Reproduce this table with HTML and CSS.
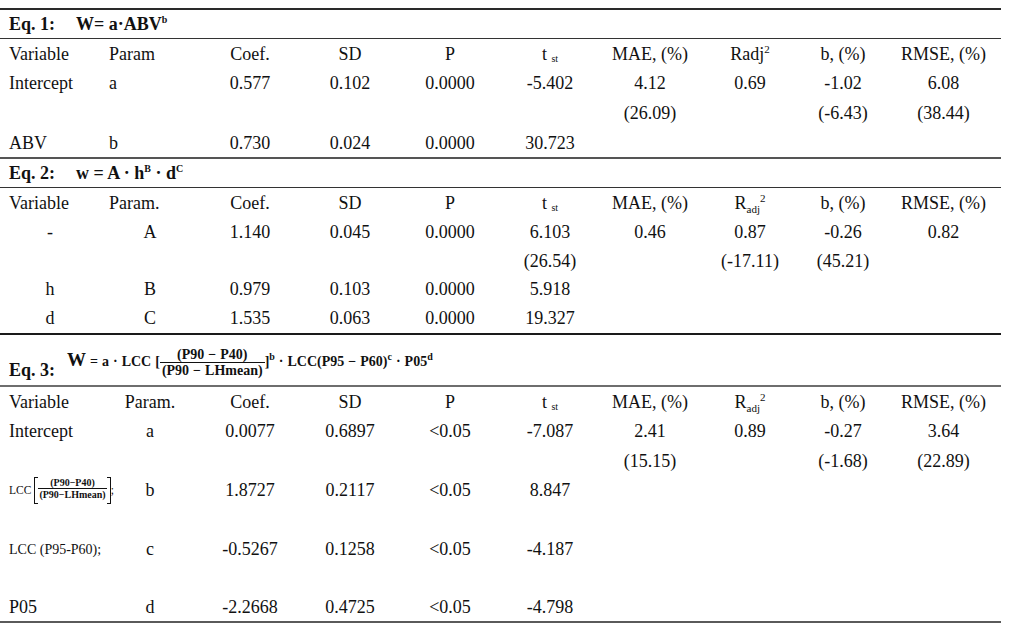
FILE: index.html
```html
<!DOCTYPE html>
<html lang="en">
<head>
<meta charset="utf-8">
<title>Regression results</title>
<link rel="stylesheet" href="styles.css">
</head>
<body>
<table class="results">
  <colgroup>
    <col class="w100"><col class="w100"><col class="w100"><col class="w100"><col class="w100">
    <col class="w100"><col class="w100"><col class="w100"><col class="w86"><col class="w115">
  </colgroup>
  <tbody>
    <tr class="title">
      <td colspan="10"><span class="lbl">Eq. 1:</span><span class="eq">W= a·ABV<sup class="esup">b</sup></span></td>
    </tr>
    <tr class="r1">
      <td class="l">Variable</td><td class="l">Param</td><td>Coef.</td><td>SD</td><td>P</td>
      <td>t <sub class="st">st</sub></td><td>MAE, (%)</td><td>Radj<sup class="sq">2</sup></td><td>b, (%)</td><td>RMSE, (%)</td>
    </tr>
    <tr class="r1">
      <td class="l">Intercept</td><td class="l">a</td><td>0.577</td><td>0.102</td><td>0.0000</td>
      <td>-5.402</td><td>4.12</td><td>0.69</td><td>-1.02</td><td>6.08</td>
    </tr>
    <tr class="r1">
      <td></td><td></td><td></td><td></td><td></td>
      <td></td><td>(26.09)</td><td></td><td>(-6.43)</td><td>(38.44)</td>
    </tr>
    <tr class="r1 end">
      <td class="l">ABV</td><td class="l">b</td><td>0.730</td><td>0.024</td><td>0.0000</td>
      <td>30.723</td><td></td><td></td><td></td><td></td>
    </tr>

    <tr class="title">
      <td colspan="10"><span class="lbl">Eq. 2:</span><span class="eq">w = A · h<sup class="esup">B</sup> · d<sup class="esup">C</sup></span></td>
    </tr>
    <tr class="r2">
      <td class="l">Variable</td><td class="l">Param.</td><td>Coef.</td><td>SD</td><td>P</td>
      <td>t <sub class="st">st</sub></td><td>MAE, (%)</td><td>R<sub class="adj">adj</sub><sup class="sq">2</sup></td><td>b, (%)</td><td>RMSE, (%)</td>
    </tr>
    <tr class="r2">
      <td>-</td><td>A</td><td>1.140</td><td>0.045</td><td>0.0000</td>
      <td>6.103</td><td>0.46</td><td>0.87</td><td>-0.26</td><td>0.82</td>
    </tr>
    <tr class="r2">
      <td></td><td></td><td></td><td></td><td></td>
      <td>(26.54)</td><td></td><td>(-17.11)</td><td>(45.21)</td><td></td>
    </tr>
    <tr class="r2">
      <td>h</td><td>B</td><td>0.979</td><td>0.103</td><td>0.0000</td>
      <td>5.918</td><td></td><td></td><td></td><td></td>
    </tr>
    <tr class="r2 end2">
      <td>d</td><td>C</td><td>1.535</td><td>0.063</td><td>0.0000</td>
      <td>19.327</td><td></td><td></td><td></td><td></td>
    </tr>

    <tr class="title title3">
      <td colspan="10"><span class="lbl lbl3">Eq. 3:</span><span class="formula"><span class="bigw">W</span> = a · LCC [<span class="frac"><span class="num">(P90 − P40)</span><span class="den">(P90 − LHmean)</span></span>]<sup class="fsup">b</sup> · LCC(P95 − P60)<sup class="fsup">c</sup> · P05<sup class="fsup">d</sup></span></td>
    </tr>
    <tr class="r3">
      <td class="l">Variable</td><td>Param.</td><td>Coef.</td><td>SD</td><td>P</td>
      <td>t <sub class="st">st</sub></td><td>MAE, (%)</td><td>R<sub class="adj">adj</sub><sup class="sq">2</sup></td><td>b, (%)</td><td>RMSE, (%)</td>
    </tr>
    <tr class="r3">
      <td class="l">Intercept</td><td>a</td><td>0.0077</td><td>0.6897</td><td>&lt;0.05</td>
      <td>-7.087</td><td>2.41</td><td>0.89</td><td>-0.27</td><td>3.64</td>
    </tr>
    <tr class="r3">
      <td></td><td></td><td></td><td></td><td></td>
      <td></td><td>(15.15)</td><td></td><td>(-1.68)</td><td>(22.89)</td>
    </tr>
    <tr class="r3">
      <td class="l"><span class="lcc">LCC<span class="brk"><span class="frac mini"><span class="num">(P90−P40)</span><span class="den">(P90−LHmean)</span></span></span>;</span></td>
      <td>b</td><td>1.8727</td><td>0.2117</td><td>&lt;0.05</td>
      <td>8.847</td><td></td><td></td><td></td><td></td>
    </tr>
    <tr class="r3 gap"><td colspan="10"></td></tr>
    <tr class="r3">
      <td class="l"><span class="lcc2">LCC (P95-P60);</span></td>
      <td>c</td><td>-0.5267</td><td>0.1258</td><td>&lt;0.05</td>
      <td>-4.187</td><td></td><td></td><td></td><td></td>
    </tr>
    <tr class="r3 gap"><td colspan="10"></td></tr>
    <tr class="r3 end3">
      <td class="l">P05</td><td>d</td><td>-2.2668</td><td>0.4725</td><td>&lt;0.05</td>
      <td>-4.798</td><td></td><td></td><td></td><td></td>
    </tr>
  </tbody>
</table>
</body>
</html>
```

FILE: styles.css
```css
html, body {
  background: #ffffff;
}

body {
  margin: 8px 0 0 0;
  font-family: "Liberation Serif", "Times New Roman", serif;
  font-size: 18px;
  color: #111111;
}

.results {
  width: 1001px;
  border-collapse: collapse;
  table-layout: fixed;
}

.w100 { width: 100px; }
.w86 { width: 86px; }
.w115 { width: 115px; }

.results td {
  padding: 0 9px;
  text-align: center;
  vertical-align: middle;
  white-space: nowrap;
  line-height: 20px;
}

.results td.l {
  text-align: left;
}

.r1 td { height: 29.6px; }
.r2 td { height: 28.9px; }
.r3 td { height: 29.5px; }

.title td {
  height: 28px;
  text-align: left;
  font-weight: bold;
  border-top: 2px solid #2a2a2a;
  border-bottom: 1.5px solid #333333;
}

.title3 td {
  height: 45px;
  vertical-align: bottom;
  padding-bottom: 5px;
  border-top: 2px solid #1a1a1a;
  border-bottom: 2px solid #6e6e6e;
}

.end td { border-bottom: 2px solid #555555; }
.end2 td { border-bottom: 2px solid #1a1a1a; }
.end3 td { border-bottom: 2px solid #5a5a5a; height: 28px; }

.lbl {
  display: inline-block;
  width: 67px;
}

.lbl3 {
  width: 58px;
}

.esup {
  font-size: 10px;
  line-height: 0;
  vertical-align: 7px;
}

.st {
  font-size: 10px;
  line-height: 0;
  vertical-align: -2px;
}

.adj {
  font-size: 11px;
  line-height: 0;
  vertical-align: -4px;
}

.sq {
  font-size: 11px;
  line-height: 0;
  vertical-align: 7px;
}

/* Eq. 3 formula */
.formula {
  font-size: 14px;
  vertical-align: 10px;
  word-spacing: 0.5px;
}

.bigw {
  font-size: 19px;
}

.frac {
  display: inline-block;
  vertical-align: -9px;
  text-align: center;
}

.frac .num {
  display: block;
  line-height: 14px;
  padding: 0 2px;
}

.frac .den {
  display: block;
  line-height: 16px;
  border-top: 1px solid #111111;
  padding: 0 2px;
}

.fsup {
  font-size: 10px;
  line-height: 0;
  vertical-align: 6px;
}

/* small formula in variable cell */
.lcc {
  font-size: 11.5px;
  display: inline-flex;
  align-items: center;
}

.brk {
  display: inline-flex;
  align-items: center;
  margin-left: 3px;
}

.brk::before,
.brk::after {
  content: "";
  display: block;
  width: 3px;
  height: 25px;
  border: 1.2px solid #111111;
}

.brk::before { border-right: none; }
.brk::after { border-left: none; }

.frac.mini {
  font-size: 10px;
  font-weight: bold;
  vertical-align: middle;
  margin-top: -2px;
}

.frac.mini .num {
  line-height: 11px;
  padding: 0 6px;
}

.frac.mini .den {
  line-height: 12px;
  border-top: 0.8px solid #111111;
  padding: 0 1px;
}

.lcc2 {
  font-size: 14px;
}
```
